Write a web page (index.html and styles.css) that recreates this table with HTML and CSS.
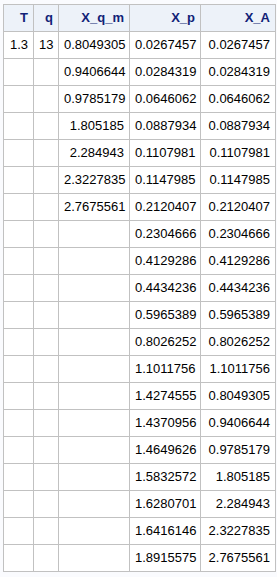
FILE: index.html
```html
<!DOCTYPE html>
<html>
<head>
<meta charset="utf-8">
<link rel="stylesheet" href="styles.css">
</head>
<body>
<table class="tbl">
<colgroup>
<col class="c-t"><col class="c-q"><col class="c-m"><col class="c-p"><col class="c-a">
</colgroup>
<thead>
<tr><th>T</th><th>q</th><th>X_q_m</th><th>X_p</th><th>X_A</th></tr>
</thead>
<tbody>
<tr><td>1.3</td><td>13</td><td>0.8049305</td><td>0.0267457</td><td>0.0267457</td></tr>
<tr><td></td><td></td><td>0.9406644</td><td>0.0284319</td><td>0.0284319</td></tr>
<tr><td></td><td></td><td>0.9785179</td><td>0.0646062</td><td>0.0646062</td></tr>
<tr><td></td><td></td><td>1.805185</td><td>0.0887934</td><td>0.0887934</td></tr>
<tr><td></td><td></td><td>2.284943</td><td>0.1107981</td><td>0.1107981</td></tr>
<tr><td></td><td></td><td>2.3227835</td><td>0.1147985</td><td>0.1147985</td></tr>
<tr><td></td><td></td><td>2.7675561</td><td>0.2120407</td><td>0.2120407</td></tr>
<tr><td></td><td></td><td></td><td>0.2304666</td><td>0.2304666</td></tr>
<tr><td></td><td></td><td></td><td>0.4129286</td><td>0.4129286</td></tr>
<tr><td></td><td></td><td></td><td>0.4434236</td><td>0.4434236</td></tr>
<tr><td></td><td></td><td></td><td>0.5965389</td><td>0.5965389</td></tr>
<tr><td></td><td></td><td></td><td>0.8026252</td><td>0.8026252</td></tr>
<tr><td></td><td></td><td></td><td>1.1011756</td><td>1.1011756</td></tr>
<tr><td></td><td></td><td></td><td>1.4274555</td><td>0.8049305</td></tr>
<tr><td></td><td></td><td></td><td>1.4370956</td><td>0.9406644</td></tr>
<tr><td></td><td></td><td></td><td>1.4649626</td><td>0.9785179</td></tr>
<tr><td></td><td></td><td></td><td>1.5832572</td><td>1.805185</td></tr>
<tr><td></td><td></td><td></td><td>1.6280701</td><td>2.284943</td></tr>
<tr><td></td><td></td><td></td><td>1.6416146</td><td>2.3227835</td></tr>
<tr><td></td><td></td><td></td><td>1.8915575</td><td>2.7675561</td></tr>
</tbody>
</table>
</body>
</html>
```
FILE: styles.css
```css
html, body {
  margin: 0;
  padding: 0;
  background: #fafbfe;
}
body {
  padding: 4px 3px;
  font-family: "Liberation Sans", Arial, sans-serif;
  font-size: 13px;
}
.tbl {
  border-collapse: collapse;
  table-layout: fixed;
  width: 272px;
  background: #ffffff;
}
.c-t { width: 30px; }
.c-q { width: 25px; }
.c-m { width: 71px; }
.c-p { width: 71px; }
.c-a { width: 75px; }
.tbl th, .tbl td {
  border: 1px solid #c1c1c1;
  padding: 5px 5px;
  line-height: 16px;
  height: 16px;
  text-align: right;
  white-space: nowrap;
  overflow: hidden;
}
.tbl th {
  background: #edf2f9;
  color: #112277;
  font-weight: bold;
}
.tbl td {
  color: #000000;
}
```
